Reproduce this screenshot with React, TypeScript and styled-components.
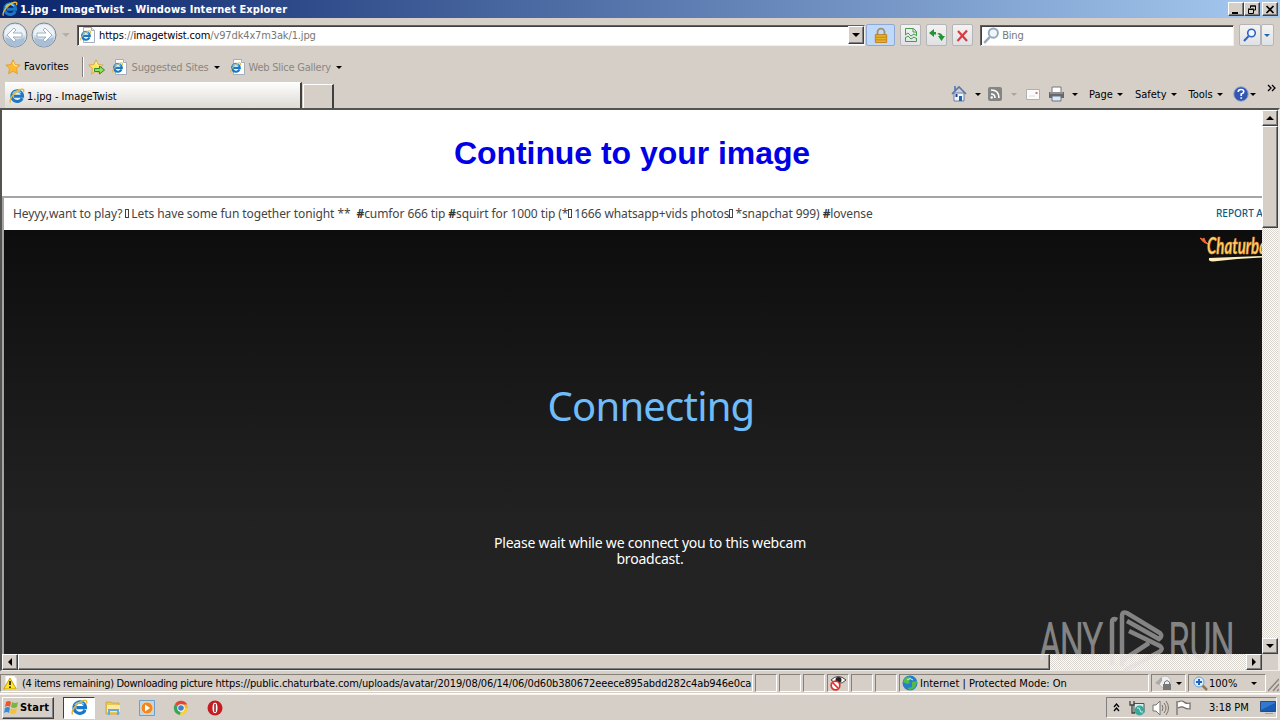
import React from 'react';
import styled, { createGlobalStyle, css } from 'styled-components';

const face = '#d6cfc8';
const tahoma = '"DejaVu Sans Condensed", "DejaVu Sans", sans-serif';

const GlobalStyle = createGlobalStyle`
  * { box-sizing: border-box; }
  html, body { margin: 0; padding: 0; overflow: hidden; }
  svg { display: block; flex-shrink: 0; }
`;

const Screen = styled.div`
  position: relative;
  display: flex;
  flex-direction: column;
  width: 1280px;
  height: 720px;
  overflow: hidden;
  background: ${face};
  font-family: ${tahoma};
  font-stretch: condensed;
  font-size: 11px;
  color: #000;
`;

const raised = css`
  background: ${face};
  border: 1px solid;
  border-color: #fff #404040 #404040 #fff;
  box-shadow: inset -1px -1px 0 #808080;
`;

const Label = styled.span<{ track?: number; color?: string; bold?: boolean; ml?: number }>`
  white-space: pre;
  line-height: 14px;
  padding-top: 2px;
  flex-shrink: 0;
  letter-spacing: ${props => props.track || 0}px;
  color: ${props => props.color || '#000'};
  font-weight: ${props => props.bold ? 'bold' : 'normal'};
  margin-left: ${props => props.ml || 0}px;
`;

const FavoritesLabel = styled(Label)`
  padding-top: 0;
`;

const Host = styled.span`
  color: #000;
`;

const Gap = styled.div<{ w?: number }>`
  width: ${props => props.w || 0}px;
  flex: ${props => props.w ? 'none' : '1'};
`;

const Triangle = styled.i<{ size?: number; color?: string }>`
  flex-shrink: 0;
  border: solid transparent;
  border-width: ${props => props.size || 3}px ${props => props.size || 3}px 0;
  border-top-color: ${props => props.color || '#000'};
`;

/* title bar */

const TitleBar = styled.div`
  display: flex;
  align-items: center;
  height: 18px;
  padding: 0 2px;
  background: linear-gradient(90deg, #0a246a, #a6caf0);
`;

const CaptionButton = styled.div<{ ml?: number }>`
  ${raised}
  width: 16px;
  height: 14px;
  margin-left: ${props => props.ml || 0}px;
  display: flex;
  align-items: center;
  justify-content: center;
`;

/* address row */

const NavRow = styled.div`
  display: flex;
  align-items: center;
  height: 34px;
  padding: 0 6px 0 2px;
`;

const Field = styled.div<{ w: number }>`
  display: flex;
  align-items: center;
  width: ${props => props.w}px;
  height: 21px;
  background: #fff;
  border: 1px solid;
  border-color: #606060 #f2efea #f2efea #606060;
  box-shadow: inset 1px 1px 0 #404040;
  padding-left: 2px;
`;

const DropButton = styled.div`
  ${raised}
  width: 16px;
  height: 18px;
  display: flex;
  align-items: center;
  justify-content: center;
`;

const NavButton = styled.div<{ w: number; ml?: number; active?: boolean }>`
  display: flex;
  align-items: center;
  justify-content: center;
  width: ${props => props.w}px;
  height: 22px;
  margin-left: ${props => props.ml || 0}px;
  border: 1px solid ${props => props.active ? '#8fa9d6' : '#b3b5ba'};
  border-radius: 2px;
  background: ${props => props.active ? '#bfd9fb' : 'linear-gradient(#f4f3f1, #dfe1e4)'};
`;

const FavoritesRow = styled.div`
  display: flex;
  align-items: center;
  height: 30px;
  padding-left: 5px;
`;

const Separator = styled.div`
  width: 2px;
  height: 20px;
  border-left: 1px solid #808080;
  border-right: 1px solid #fff;
`;

/* tabs and command bar */

const TabRow = styled.div`
  display: flex;
  align-items: flex-end;
  height: 26px;
  padding-left: 5px;
`;

const Tab = styled.div`
  display: flex;
  align-items: center;
  width: 297px;
  height: 26px;
  padding-left: 4px;
  background: linear-gradient(#fdfdfc, #dedad4);
  border-right: 2px solid #404040;
  border-top: 1px solid #fff;
`;

const NewTab = styled.div`
  width: 31px;
  height: 24px;
  margin-left: 1px;
  border: solid;
  border-width: 1px 2px 0 1px;
  border-color: #fff #404040 #fff #fff;
`;

const CommandBar = styled.div`
  display: flex;
  align-items: center;
  align-self: stretch;
  width: 329px;
  padding-bottom: 2px;
`;

const Overflow = styled.svg`
  margin-bottom: 12px;
`;

/* page viewport */

const Viewport = styled.div`
  display: grid;
  grid-template-columns: 1260px 16px;
  grid-template-rows: 544px 16px;
  height: 563px;
  border: solid;
  border-width: 2px;
  border-bottom-width: 1px;
  border-color: #55534f #efece8 #efece8 #55534f;
`;

const Page = styled.div`
  background: #fff;
  overflow: hidden;
`;

const Heading = styled.h1`
  margin: 0;
  height: 86px;
  padding-top: 24px;
  text-align: center;
  font: bold 32px/38px "Liberation Sans", Arial, sans-serif;
  letter-spacing: -0.05px;
  color: #0000e6;
`;

const Frame = styled.div`
  height: 458px;
  border: solid #a5a5a5;
  border-width: 2px 0 0 2px;
`;

const Subject = styled.div`
  display: flex;
  align-items: center;
  height: 32px;
  padding: 0 0 2px 9px;
  overflow: hidden;
  font: 12px "Noto Sans", sans-serif;
  color: #444;
`;

const Topic = styled.span`
  width: 1203px;
  flex-shrink: 0;
  white-space: pre;
  letter-spacing: -0.09px;
  b { font-weight: 700; color: #333; }
`;

const Missing = styled.i`
  display: inline-block;
  width: 4px;
  height: 9px;
  margin: 0 2px 0 0;
  border: 1px solid #444;
`;

const Report = styled.span`
  flex-shrink: 0;
  white-space: nowrap;
  padding-bottom: 1px;
  font-size: 10px;
  font-weight: 500;
  color: #0a5a83;
`;

const Player = styled.div`
  position: relative;
  height: 424px;
  background: linear-gradient(#0d0d0d 0, #181818 35%, #222 70%, #232323);
  font-family: "Noto Sans", sans-serif;
  text-align: center;
`;

const Connecting = styled.div`
  width: 1294px;
  padding-top: 149px;
  font-size: 40px;
  line-height: 54px;
  letter-spacing: -0.8px;
  color: #6fbcf9;
`;

const Waiting = styled.div`
  width: 1292px;
  margin-top: 102px;
  font-size: 14px;
  line-height: 16px;
  letter-spacing: -0.21px;
  color: #fff;
`;

const SiteLogo = styled.svg`
  position: absolute;
  top: 2px;
  right: 0;
`;

const Track = styled.div<{ vertical?: boolean }>`
  display: flex;
  flex-direction: ${props => props.vertical ? 'column' : 'row'};
  background: repeating-conic-gradient(#fff 0 25%, #d9d4ce 0 50%) 0 0 / 2px 2px;
`;

const ScrollButton = styled.div`
  ${raised}
  width: 16px;
  height: 16px;
  display: flex;
  align-items: center;
  justify-content: center;
`;

const Thumb = styled.div<{ w: number; h: number }>`
  ${raised}
  width: ${props => props.w}px;
  height: ${props => props.h}px;
`;

/* status bar */

const StatusBar = styled.div`
  display: flex;
  height: 23px;
  padding: 3px 0 2px;
  gap: 2px;
  border-bottom: 1px solid #fff;
`;

const Cell = styled.div<{ w: number }>`
  display: flex;
  align-items: center;
  width: ${props => props.w}px;
  height: 18px;
  overflow: hidden;
  flex-shrink: 0;
  padding-left: 2px;
  border: 1px solid;
  border-color: #858078 #fff #fff #858078;
`;

/* taskbar */

const Taskbar = styled.div`
  display: flex;
  align-items: center;
  height: 26px;
  border-top: 1px solid #f4f1ed;
  padding-left: 2px;
`;

const StartButton = styled.div`
  ${raised}
  display: flex;
  align-items: center;
  width: 52px;
  height: 22px;
  padding-left: 1px;
`;

const StartLabel = styled(Label)`
  padding-top: 0;
`;

const ActiveTask = styled.div`
  display: flex;
  align-items: center;
  justify-content: center;
  width: 32px;
  height: 22px;
  margin: 0 9px;
  background: #fff;
  border: 1px solid;
  border-color: #404040 #fff #fff #404040;
`;

const QuickLaunch = styled.div`
  display: flex;
  align-items: center;
  gap: 18px;
  margin-left: 1px;
`;

const Tray = styled.div`
  display: flex;
  align-items: center;
  width: 171px;
  height: 21px;
  margin-right: 3px;
  padding-left: 6px;
  border: 1px solid;
  border-color: #808080 #fff #fff #808080;
`;

const Watermark = styled.div`
  position: absolute;
  left: 1040px;
  top: 608px;
  width: 192px;
  height: 64px;
  opacity: 0.52;
`;

const Brand = styled.span<{ x: number; squeeze: number }>`
  position: absolute;
  left: ${props => props.x}px;
  top: 6px;
  font: 300 50px/56px Roboto, sans-serif;
  font-stretch: normal;
  color: #ddd;
  -webkit-text-stroke: 2px #ddd;
  transform: scaleX(${props => props.squeeze});
  transform-origin: left;
`;

const IeGlyph = () => (
  <g>
    <path d="M13.2 10.2A5.4 5.4 0 1 1 13.6 8.2H5" fill="none" stroke="#1b78c8" strokeWidth="3" />
    <path d="M3.6 5.8A5.2 5.2 0 0 1 12 5" fill="none" stroke="#6fd0f8" strokeWidth="1.4" />
    <path d="M1.5 14.6C-.5 11.5 5.5 3.3 11.5 1.5c3.3-1 3.7.8 2.9 2.8" fill="none" stroke="#e8b737" strokeWidth="1.4" />
  </g>
);

const IeIcon = ({ size = 16 }: { size?: number }) => (
  <svg width={size} height={size} viewBox="0 0 16 16"><IeGlyph /></svg>
);

const IePageIcon = () => (
  <svg width="16" height="16" viewBox="0 0 16 16">
    <path d="M3.5.5h8l3 3v12h-11z" fill="#fff" stroke="#a5adba" />
    <path d="M11.5.5v3h3" fill="#dfe7f0" stroke="#a5adba" />
    <g transform="translate(0 3) scale(.72)"><IeGlyph /></g>
  </svg>
);

const Star = ({ add = false }: { add?: boolean }) => (
  <svg width="17" height="16" viewBox="0 0 17 16">
    <path d="M8 .8l2.2 4.7 5 .6-3.7 3.5 1 5.2L8 12.3l-4.5 2.5 1-5.2L.8 6.1l5-.6z" fill={add ? '#ffe75c' : '#ffb92d'} stroke="#dc9a35" strokeWidth=".8" />
    <path d="M8 3l1.4 3.4L12 7" fill="none" stroke="#fff3b0" />
    {add && <path d="M6.5 9.5h5V7l5 4-5 4v-2.5h-5z" fill="#8fe05b" stroke="#2c8b30" />}
  </svg>
);

const NavArrow = ({ flip = false }: { flip?: boolean }) => (
  <svg width="26" height="26" viewBox="0 0 26 26">
    <circle cx="13" cy="13" r="12" fill="#d5e1ed" stroke="#7b8794" />
    <path d="M2.5 13a10.5 10.5 0 0 1 21 0z" fill="#edf2f7" />
    <path d="M3 15a10 10 0 0 0 20 0q-10 5-20 0" fill="#a9bfd5" />
    <path transform={flip ? 'matrix(-1 0 0 1 26 0)' : undefined} d="M12 6l-7 7 7 7 2-2-3-3h9v-4h-9l3-3z" fill="#fff" stroke="#8ca1b7" strokeWidth=".8" />
  </svg>
);

const Magnifier = ({ color = '#2e62c9', size = 14 }: { color?: string; size?: number }) => (
  <svg width={size} height={size} viewBox="0 0 14 14">
    <path d="M1 13l4.500-4.700" stroke={color} strokeWidth="2" />
    <circle cx="8.5" cy="5" r="3.8" fill="#eef6ff" stroke={color} strokeWidth="1.6" />
  </svg>
);

const Arrow = ({ turn = 0 }: { turn?: number }) => (
  <svg width="8" height="8" viewBox="0 0 8 8"><path transform={`rotate(${turn} 4 4)`} d="M0 6h8L4 2z" /></svg>
);

const App: React.FC = () => (
  <Screen>
    <GlobalStyle />
    <TitleBar>
      <IeIcon />
      <Label ml={2} color="#fff" bold track={0.09}>1.jpg - ImageTwist - Windows Internet Explorer</Label>
      <Gap />
      <CaptionButton><svg width="10" height="9"><path d="M1 7h6v2H1z" /></svg></CaptionButton>
      <CaptionButton>
        <svg width="10" height="9"><path d="M3.5 3V1h5v4H7M3 1h6M1.5 4.5h5v4h-5zM1 4h6" fill="none" stroke="#000" /></svg>
      </CaptionButton>
      <CaptionButton ml={2}>
        <svg width="10" height="9"><path d="M1.5 1l7 7M8.5 1l-7 7" stroke="#000" strokeWidth="1.7" /></svg>
      </CaptionButton>
    </TitleBar>

    <NavRow>
      <NavArrow />
      <Gap w={3} />
      <NavArrow flip />
      <Gap w={5} />
      <Triangle size={4} color="#b5afa8" />
      <Gap w={7} />
      <Field w={789}>
        <IePageIcon />
        <Label ml={3} track={-0.14} color="#777"><Host>https</Host>://<Host>imagetwist.com</Host>/v97dk4x7m3ak/1.jpg</Label>
        <Gap />
        <DropButton><Triangle size={4} /></DropButton>
      </Field>
      <NavButton w={29} ml={1} active>
        <svg width="14" height="17" viewBox="0 0 16 18">
          <path d="M4 9V5a4 4 0 0 1 8 0v4" fill="none" stroke="#a08f68" strokeWidth="2" />
          <path d="M1.5 8h13v9h-13z" fill="#eab12d" stroke="#b77d16" />
          <path d="M2 11h12M2 14h12" stroke="#bd841a" />
        </svg>
      </NavButton>
      <NavButton w={21} ml={5}>
        <svg width="14" height="16" viewBox="0 0 14 16" fill="none" stroke="#459b4b">
          <path d="M1.5 8V1.5h8l3 3V8M1.5 11v3.5h11V11M9 2v3h3" />
          <path d="M1 8l3-2 3 3 3-2 3 2M1 11l3-2 3 3 3-2 3 2" />
        </svg>
      </NavButton>
      <NavButton w={21} ml={5}>
        <svg width="16" height="14" viewBox="0 0 16 14" fill="#249334">
          <path d="M5 1L0 5l5 4V6.5h2V4H5z" />
          <path d="M8 6q3-3 6 2h2l-3.5 5L9 8h2q-1-2-3-2z" />
        </svg>
      </NavButton>
      <NavButton w={21} ml={5}>
        <svg width="13" height="13"><path d="M2 2l9 10M11 1.5L1.5 12" stroke="#d83b42" strokeWidth="2.2" /></svg>
      </NavButton>
      <Gap w={7} />
      <Field w={254}>
        <Magnifier size={17} color="#95a8bd" />
        <Label ml={2} track={-0.2} color="#777">Bing</Label>
      </Field>
      <Gap w={5} />
      <NavButton w={22}><Magnifier /></NavButton>
      <NavButton w={13}><Triangle color="#2166b3" /></NavButton>
    </NavRow>

    <FavoritesRow>
      <Star />
      <FavoritesLabel ml={2}>Favorites</FavoritesLabel>
      <Gap w={13} />
      <Separator />
      <Gap w={4} />
      <Star add />
      <Gap w={7} />
      <IePageIcon />
      <Label ml={4} track={-0.2} color="#8a8781">Suggested Sites</Label>
      <Gap w={5} />
      <Triangle />
      <Gap w={10} />
      <IePageIcon />
      <Label ml={3} track={-0.24} color="#8a8781">Web Slice Gallery</Label>
      <Gap w={5} />
      <Triangle />
    </FavoritesRow>

    <TabRow>
      <Tab>
        <IeIcon />
        <Label ml={2}>1.jpg - ImageTwist</Label>
      </Tab>
      <NewTab />
      <Gap />
      <CommandBar>
        <svg width="16" height="18" viewBox="0 0 16 18">
          <path d="M3 8h10v8H3z" fill="#f3f7fc" stroke="#647faf" />
          <path d="M1 9l7-7 7 7M4 6V1" fill="none" stroke="#5576ad" strokeWidth="1.6" />
          <path d="M8 11h3v5H8z" fill="#2563a8" /><path d="M4.5 9h2v3h-2z" fill="#203f82" />
        </svg>
        <Gap w={8} /><Triangle /><Gap w={7} />
        <svg width="14" height="14" viewBox="0 0 14 14">
          <rect width="14" height="14" rx="2" fill="#858585" />
          <path d="M3 7q4 0 4 4M3 3q8 0 8 8" fill="none" stroke="#fff" strokeWidth="1.6" /><circle cx="3.7" cy="10.5" r="1.2" fill="#fff" />
        </svg>
        <Gap w={9} /><Triangle color="#aaa49e" /><Gap w={9} />
        <svg width="14" height="11"><path d="M.5.5h13v10H.5z" fill="#fbfbfb" stroke="#b4aeb0" /><path d="M9.5 3h2v2h-2z" fill="#d47676" /><path d="M3 7h6" stroke="#ddd" /></svg>
        <Gap w={8} />
        <svg width="17" height="16" viewBox="0 0 17 16">
          <path d="M4 1h9v6H4z" fill="#fff" stroke="#777" />
          <path d="M1 6h15v6H1z" fill="#66676a" /><path d="M2 7h13" stroke="#bbb" />
          <path d="M4 10h9v5H4z" fill="#dce9f6" stroke="#687583" />
        </svg>
        <Gap w={7} /><Triangle /><Gap w={11} />
        <Label>Page</Label><Gap w={4} /><Triangle /><Gap w={12} />
        <Label>Safety</Label><Gap w={4} /><Triangle /><Gap w={12} />
        <Label>Tools</Label><Gap w={4} /><Triangle /><Gap w={10} />
        <svg width="16" height="16" viewBox="0 0 16 16">
          <circle cx="8" cy="8" r="7.3" fill="#3157b2" stroke="#9aacc9" />
          <path d="M5.2 6q0-2.5 2.8-2.5t2.8 2.2Q10.8 7 8.2 8v2M7.4 12h1.7" fill="none" stroke="#fff" strokeWidth="1.6" />
        </svg>
        <Gap w={1} /><Triangle /><Gap w={11} />
        <Overflow width="9" height="10"><path d="M1 2l3 3-3 3M5 2l3 3-3 3" fill="none" stroke="#000" strokeWidth="1.3" /></Overflow>
      </CommandBar>
    </TabRow>

    <Viewport>
      <Page>
        <Heading>Continue to your image</Heading>
        <Frame>
          <Subject>
            <Topic>
              Heyyy,want to play? <Missing />Lets have some fun together tonight **  <b>#</b>cumfor 666 tip <b>#</b>squirt for 1000 tip (*<Missing />1666 whatsapp+vids photos<Missing />*snapchat 999) <b>#</b>lovense
            </Topic>
            <Report>REPORT A</Report>
          </Subject>
          <Player>
            <Connecting>Connecting</Connecting>
            <Waiting>Please wait while we connect you to this webcam<br />broadcast.</Waiting>
            <SiteLogo width="64" height="34" viewBox="0 0 64 34">
              <path d="M2 6q3 2 4 0 1 4 4 6-5-1-8-6z" fill="#ef6b38" stroke="#ef6b38" />
              <text x="9" y="22" fill="#fbd76a" stroke="#f0862b" strokeWidth=".6" fontFamily="Lato, sans-serif" fontWeight="700" fontStyle="italic" fontSize="22" textLength="60" lengthAdjust="spacingAndGlyphs">Chaturba</text>
              <path d="M11 26q25-1 53-2v1.500q-25 1-49 4-5 0-4-3.500z" fill="#fff0bd" />
            </SiteLogo>
          </Player>
        </Frame>
      </Page>
      <Track vertical>
        <ScrollButton><Arrow /></ScrollButton>
        <Thumb w={16} h={102} />
        <Gap />
        <ScrollButton><Arrow turn={180} /></ScrollButton>
      </Track>
      <Track>
        <ScrollButton><Arrow turn={-90} /></ScrollButton>
        <Thumb w={1032} h={16} />
        <Gap />
        <ScrollButton><Arrow turn={90} /></ScrollButton>
      </Track>
    </Viewport>

    <StatusBar>
      <Cell w={753}>
        <svg width="16" height="16" viewBox="0 0 16 16">
          <path d="M2 .5h9l3 3v12H2z" fill="#fff" stroke="#d5d2cb" />
          <path d="M7 3l6.3 11H.7z" fill="#ffe229" stroke="#c5a500" /><path d="M7 6v4M7 11.5V13" stroke="#000" strokeWidth="1.5" />
        </svg>
        <Label ml={3} track={-0.32}>(4 items remaining) Downloading picture </Label>
        <Label track={-0.13}>https://public.chaturbate.com/uploads/avatar/2019/08/06/14/06/0d60b380672eeece895abdd282c4ab946e0ca</Label>
      </Cell>
      <Cell w={22} /><Cell w={22} /><Cell w={22} />
      <Cell w={22}>
        <svg width="17" height="16" viewBox="0 0 17 16">
          <path d="M1 5q7-7 15 0-7 7-15 0z" fill="#fff" stroke="#444" /><circle cx="8.5" cy="5" r="3" fill="#222" />
          <circle cx="5.5" cy="10.5" r="4.3" fill="#fff" stroke="#df3030" strokeWidth="1.7" /><path d="M3 8l5 5" stroke="#df3030" strokeWidth="1.7" />
        </svg>
      </Cell>
      <Cell w={22} /><Cell w={22} />
      <Cell w={250}>
        <svg width="16" height="16" viewBox="0 0 16 16">
          <circle cx="8" cy="8" r="7.5" fill="#237fc8" /><path d="M3 3q4-3 6 0L7 6l1 2-3 1-4-2zM10 7l5-1q0 5-4 8l-4 1-1-2 4-1z" fill="#54b84d" />
          <path d="M5 5q3-3 6 0" stroke="#c8f1ff" fill="none" />
        </svg>
        <Label ml={2}>Internet | Protected Mode: On</Label>
      </Cell>
      <Cell w={35}>
        <svg width="18" height="16" viewBox="0 0 18 16">
          <circle cx="11" cy="7" r="6" fill="#eee" stroke="#bbb" /><path d="M1 8l7-6v4l-3 4z" fill="#aaa" />
          <path d="M10.5 9V7q2.5-3 5 0v2" fill="none" stroke="#777" /><path d="M9 9h8v6H9z" fill="#777" />
        </svg>
        <Gap w={4} /><Triangle />
      </Cell>
      <Cell w={78}>
        <Gap w={2} />
        <svg width="15" height="15" viewBox="0 0 15 15">
          <path d="M9 9l5 5" stroke="#907957" strokeWidth="2.5" /><circle cx="6" cy="6" r="5" fill="#d9efff" stroke="#68a4d9" />
          <path d="M3 6h6M6 3v6" stroke="#2464bf" strokeWidth="2" />
        </svg>
        <Label ml={1}>100%</Label><Gap w={14} /><Triangle />
      </Cell>
      <svg width="11" height="18"><path d="M0 17L11 5M5 17l6-7M9 17l2-2" stroke="#8a857e" strokeWidth="1.5" /></svg>
    </StatusBar>

    <Taskbar>
      <StartButton>
        <svg width="16" height="15" viewBox="0 0 16 15">
          <path d="M2 2q3-2 5 0L6 7Q4 5 1 7z" fill="#e95730" /><path d="M8 2q3 2 6 0l-1 5q-3 2-6 0z" fill="#76b83f" />
          <path d="M1 8q3-2 5 0l-1 5q-2-2-5 0z" fill="#338dd6" /><path d="M7 8q3 2 6 0l-1 5q-3 2-6 0z" fill="#f5c32d" />
        </svg>
        <StartLabel bold track={0.2}>Start</StartLabel>
      </StartButton>
      <ActiveTask><IeIcon size={17} /></ActiveTask>
      <QuickLaunch>
        <svg width="16" height="16" viewBox="0 0 16 16">
          <path d="M1 2h5l1 1h7v11H1z" fill="#e9c75b" stroke="#d0aa48" /><path d="M2 5h13v7H2z" fill="#fbe9a0" />
          <path d="M4 15v-5h9v5M3 10h11" fill="none" stroke="#67a9d7" strokeWidth="2" />
        </svg>
        <svg width="16" height="16" viewBox="0 0 16 16">
          <path d="M.5.5h15v15H.5z" fill="#b8d8f2" stroke="#6f9fc9" /><circle cx="8" cy="8" r="6" fill="#f28620" stroke="#ffd38c" /><path d="M6 4.5v7l5-3.5z" fill="#fff" />
        </svg>
        <svg width="16" height="16" viewBox="0 0 16 16">
          <path d="M8 8L1.8 4.5A7 7 0 0 1 14.2 4.5z" fill="#e24438" /><path d="M8 8h7a7 7 0 0 1-8 7z" fill="#fbcf37" /><path d="M8 8L7 15A7 7 0 0 1 1.8 4.5z" fill="#3aa657" />
          <path d="M8 4.5h6.2l.8 3.5H8z" fill="#efb837" /><circle cx="8" cy="8" r="3.7" fill="#fff" /><circle cx="8" cy="8" r="2.8" fill="#427dd2" />
        </svg>
        <svg width="16" height="16" viewBox="0 0 16 16"><circle cx="8" cy="8" r="7.5" fill="#c51c24" /><ellipse cx="8" cy="8" rx="2.5" ry="5.2" fill="#fff" /><path d="M8 4v8" stroke="#941219" strokeWidth="1.5" /></svg>
      </QuickLaunch>
      <Gap />
      <Tray>
        <svg width="7" height="10"><path d="M1 4l2.5-3L6 4M1 8l2.5-3L6 8" fill="none" stroke="#000" strokeWidth="1.3" /></svg>
        <Gap w={9} />
        <svg width="16" height="16" viewBox="0 0 16 16"><path d="M5 3.5h10v9H5z" fill="#d7eeea" stroke="#455" /><circle cx="10.5" cy="10.5" r="5" fill="#3aa99b" /><path d="M8 8q3-1 3 2t3 2" stroke="#c8f0e8" fill="none" /><path d="M1 1v4h4V1M3 5v8h3" fill="none" stroke="#444" strokeWidth="1.3" /></svg>
        <Gap w={7} />
        <svg width="17" height="16" viewBox="0 0 17 16" fill="none" stroke="#77736e"><path d="M1 5h3l4-4v14l-4-4H1z" fill="#fff" /><path d="M10 5q2 3 0 6M12 3q4 5 0 10M14 1q5 7 0 14" /></svg>
        <Gap w={6} />
        <svg width="17" height="16" viewBox="0 0 17 16"><path d="M2 15V1M3 2q4-2 6 0t6 1v6q-4 0-6-1.500T3 8" fill="#fff" stroke="#6d6964" strokeWidth="1.2" /></svg>
        <StartLabel ml={17}>3:18 PM</StartLabel>
        <Gap w={11} />
        <svg width="16" height="14" viewBox="0 0 16 14"><path d="M.5.5h15v10H.5z" fill="#3479ce" stroke="#244d86" /><path d="M1 9L15 2v8H1z" fill="#195bb3" /><path d="M5 12.5h8" stroke="#85a6ce" /></svg>
      </Tray>
    </Taskbar>

    <Watermark>
      <Brand x={0} squeeze={0.65}>ANY</Brand>
      <svg width="192" height="64" viewBox="0 0 192 64" fill="none" stroke="#ddd" strokeWidth="4.5">
        <path d="M77 12q-5-3-5 3v42" />
        <path d="M82 58V8q0-5 5-3l33 20q3 3-1 6L87 13" />
        <path d="M89 23l31 15q4 3-1 6L84 63" />
        <path d="M83 52l26-17" />
      </svg>
      <Brand x={129} squeeze={0.65}>RUN</Brand>
    </Watermark>
  </Screen>
);

export default App;
